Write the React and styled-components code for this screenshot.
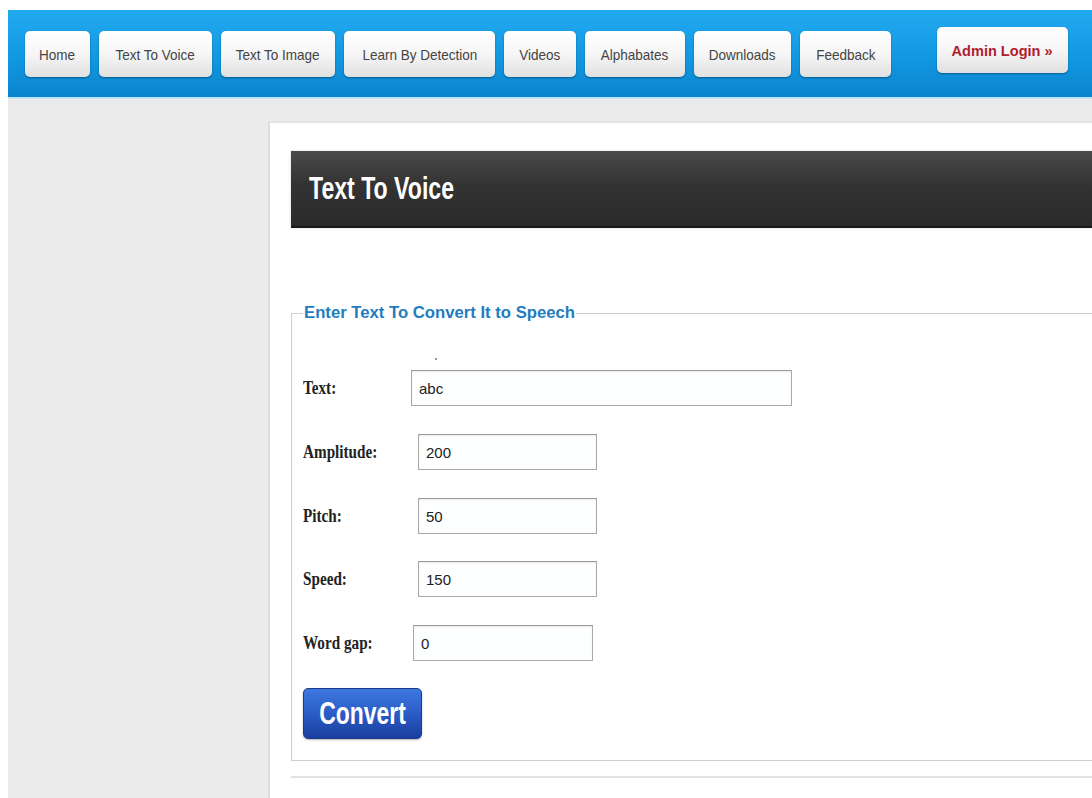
import React from 'react';
import styled, { createGlobalStyle } from 'styled-components';

const GlobalStyle = createGlobalStyle`
  html, body {
    margin: 0;
    padding: 0;
    background: #fff;
    overflow: hidden;
  }
  body {
    font-family: "Liberation Sans", Arial, sans-serif;
  }
`;

const Page = styled.div`
  padding: 10px 0 0 8px;
  min-height: 798px;
  box-sizing: border-box;
`;

// narrow letterforms: scale glyphs horizontally around their centre or left edge
const Squeeze = styled.span`
  display: inline-block;
  white-space: nowrap;
  transform: scaleX(${p => p.$x});
  transform-origin: ${p => (p.$center ? 'center' : 'left')} center;
`;

const NavBar = styled.div`
  height: 89px;
  display: flex;
  align-items: flex-start;
  gap: 9px;
  padding: 21px 0 0 17px;
  box-sizing: border-box;
  background: linear-gradient(#22aaf0 0%, #1298e2 55%, #0a84cc 100%);
  border-bottom: 2px solid #bfe4fa;
`;

const NavButton = styled.a`
  display: flex;
  align-items: center;
  justify-content: center;
  width: ${p => p.$w}px;
  height: 46px;
  flex-shrink: 0;
  box-sizing: border-box;
  border-radius: 5px;
  background: linear-gradient(#ffffff 0%, #f6f6f6 50%, #e0e0e0 100%);
  box-shadow: 0 1px 2px rgba(0, 0, 0, 0.35);
  color: #444;
  font-size: 15px;
  text-decoration: none;
`;

const LoginButton = styled(NavButton)`
  margin: -4px 0 0 37px;
  color: #b11c2e;
  font-weight: bold;
  font-size: 15px;
`;

const Body = styled.div`
  background: #ebebeb;
  padding: 22px 0 0 260px;
  min-height: 700px;
`;

const Card = styled.div`
  width: 860px;
  min-height: 690px;
  background: #fff;
  border-left: 2px solid #dcdcdc;
  border-top: 2px solid #e4e4e4;
  padding: 28px 0 0 21px;
  box-sizing: border-box;
`;

const TitleBar = styled.div`
  height: 75px;
  display: flex;
  align-items: center;
  padding-left: 18px;
  background: linear-gradient(#4a4a4a 0%, #333 45%, #2a2a2a 100%);
  border-bottom: 2px solid #1a1a1a;
  box-shadow: 0 0 3px rgba(0, 0, 0, 0.15);
`;

const Title = styled.h1`
  margin: 0;
  color: #fff;
  font-size: 31px;
  font-weight: bold;
  line-height: 1;
`;

const Fieldset = styled.fieldset`
  margin: 75px 0 0 0;
  padding: 35px 0 21px 11px;
  border: 1px solid #cfcfcf;
  border-right: none;
`;

const Legend = styled.legend`
  padding: 0 1px;
  color: #1f7cbf;
  font-size: 16.7px;
  font-weight: bold;
`;

const Dot = styled.div`
  width: 2px;
  height: 2px;
  margin: 0 0 10px 132px;
  background: #999;
`;

const Row = styled.div`
  display: flex;
  align-items: center;
  margin-bottom: ${p => p.$gap}px;
`;

const Label = styled.label`
  width: 108px;
  flex-shrink: 0;
  font-family: "Liberation Serif", "Times New Roman", serif;
  font-weight: bold;
  font-size: 19px;
  color: #222;
`;

const Input = styled.input`
  width: ${p => p.$width}px;
  height: 36px;
  margin-left: ${p => p.$shift || 0}px;
  padding: 0 7px;
  box-sizing: border-box;
  border: 1px solid #a9a9a9;
  border-top-color: #9a9a9a;
  box-shadow: inset 0 1px 2px rgba(0, 0, 0, 0.08);
  background: #fdfefe;
  font-family: "Liberation Sans", Arial, sans-serif;
  font-size: 15px;
  color: #222;
  outline: none;
`;

const ConvertButton = styled.button`
  width: 119px;
  height: 51px;
  padding: 0;
  border: 1px solid #1b3a8c;
  border-radius: 5px;
  background: linear-gradient(#3d78e0 0%, #2a5cc6 50%, #1a3e9e 100%);
  box-shadow: 0 1px 2px rgba(0, 0, 0, 0.3);
  color: #fff;
  font-family: "Liberation Sans", Arial, sans-serif;
  font-size: 31px;
  font-weight: bold;
  cursor: pointer;
`;

const Divider = styled.hr`
  margin: 15px 0 0 0;
  border: none;
  border-top: 2px solid #e2e2e2;
`;

const menu = [
  { label: 'Home', w: 65 },
  { label: 'Text To Voice', w: 113 },
  { label: 'Text To Image', w: 114 },
  { label: 'Learn By Detection', w: 151 },
  { label: 'Videos', w: 72 },
  { label: 'Alphabates', w: 100 },
  { label: 'Downloads', w: 97 },
  { label: 'Feedback', w: 91 },
];

const fields = [
  { label: 'Text:', value: 'abc', width: 381, shift: 0, gap: 28 },
  { label: 'Amplitude:', value: '200', width: 179, shift: 7, gap: 28 },
  { label: 'Pitch:', value: '50', width: 179, shift: 7, gap: 27 },
  { label: 'Speed:', value: '150', width: 179, shift: 7, gap: 28 },
  { label: 'Word gap:', value: '0', width: 180, shift: 2, gap: 27 },
];

const App = () => {
  return (
    <>
      <GlobalStyle />
      <Page>
        <NavBar>
          {menu.map(item => (
            <NavButton key={item.label} href="#" $w={item.w}>
              <Squeeze $x={0.9} $center>{item.label}</Squeeze>
            </NavButton>
          ))}
          <LoginButton href="#" $w={131}>
            <Squeeze $x={0.97} $center>Admin Login »</Squeeze>
          </LoginButton>
        </NavBar>
        <Body>
          <Card>
            <TitleBar>
              <Title>
                <Squeeze $x={0.745}>Text To Voice</Squeeze>
              </Title>
            </TitleBar>
            <Fieldset>
              <Legend>Enter Text To Convert It to Speech</Legend>
              <Dot />
              {fields.map(f => (
                <Row key={f.label} $gap={f.gap}>
                  <Label>
                    <Squeeze $x={0.8}>{f.label}</Squeeze>
                  </Label>
                  <Input defaultValue={f.value} $width={f.width} $shift={f.shift} />
                </Row>
              ))}
              <ConvertButton>
                <Squeeze $x={0.74} $center>Convert</Squeeze>
              </ConvertButton>
            </Fieldset>
            <Divider />
          </Card>
        </Body>
      </Page>
    </>
  );
};

export default App;
